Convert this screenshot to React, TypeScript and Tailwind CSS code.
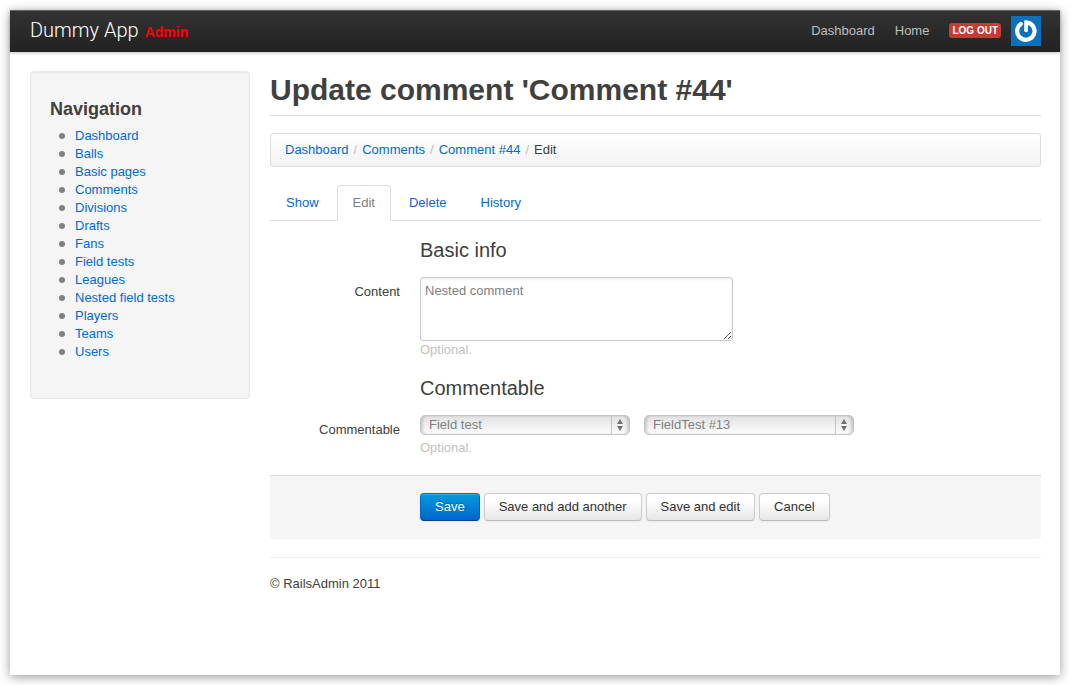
import React, { useState } from "react";

const navigation = [
  "Dashboard",
  "Balls",
  "Basic pages",
  "Comments",
  "Divisions",
  "Drafts",
  "Fans",
  "Field tests",
  "Leagues",
  "Nested field tests",
  "Players",
  "Teams",
  "Users",
];

const trail = ["Dashboard", "Comments", "Comment #44"];
const tabs = ["Show", "Edit", "Delete", "History"];
const secondaryActions = ["Save and add another", "Save and edit", "Cancel"];

function Avatar() {
  return (
    <svg viewBox="0 0 30 30" className="size-[30px]" role="img" aria-label="Avatar">
      <rect width="30" height="30" fill="#0c71b8" />
      <path
        d="M9.8 8 A8.7 8.7 0 1 0 19.6 7.8"
        fill="none"
        stroke="#fff"
        strokeWidth="4.2"
        strokeLinecap="round"
      />
      <path
        d="M13.2 5.2 Q13.2 4.2 14.4 4.2 C17.2 4.2 19.4 4.9 21.4 6.4 L18.6 9.8 L17 9 V14.4 Q17 16.2 15.1 16.2 Q13.2 16.2 13.2 14.4 Z"
        fill="#fff"
      />
    </svg>
  );
}

function Header() {
  return (
    <header className="flex h-[42px] shrink-0 items-center justify-between bg-linear-to-b from-[#333] to-[#222] pr-[19px] pb-px pl-5 shadow-[inset_0_1px_0_#666,0_1px_3px_rgba(0,0,0,0.25)]">
      <a href="#" className="flex items-baseline gap-[6px] text-white">
        <span className="font-['Roboto',sans-serif] text-xl leading-5 font-light">Dummy App</span>
        <small className="text-sm leading-5 font-bold text-[#f00]">Admin</small>
      </a>
      <nav className="flex items-center text-[#bfbfbf]">
        <a href="#" className="mr-5">Dashboard</a>
        <a href="#" className="mr-5">Home</a>
        <a href="#" className="mr-[10px] rounded-[3px] bg-[#c43c35] px-[3px] text-[10px] leading-[15px] font-bold text-white uppercase">
          Log out
        </a>
        <Avatar />
      </nav>
    </header>
  );
}

function Sidebar() {
  return (
    <aside className="w-[220px] shrink-0 rounded-[4px] border border-[#e8e8e8] bg-[#f5f5f5] p-[19px] shadow-[inset_0_1px_1px_rgba(0,0,0,0.05)]">
      <h2 className="text-lg leading-9 font-bold text-[#404040]">Navigation</h2>
      <ul className="mb-[18px] pl-[9px]">
        {navigation.map((item) => (
          <li
            key={item}
            className="flex items-center gap-[10px] before:size-[6px] before:rounded-full before:bg-[#808080]"
          >
            <a href="#" className="text-[#0069d6]">{item}</a>
          </li>
        ))}
      </ul>
    </aside>
  );
}

function Select({ label, options }: { label: string; options: string[] }) {
  return (
    <div className="relative w-[210px]">
      <select
        id={label.toLowerCase().replace(/ /g, "-")}
        aria-label={label}
        className="block h-5 w-full appearance-none rounded-[5px] border border-[#c4c4c4] bg-linear-to-b from-[#e2e2e2] to-[#fdfdfd] pr-6 pl-2 leading-[18px] text-[#808080] shadow-[inset_3px_0_3px_-1px_rgba(0,0,0,0.16),inset_-3px_0_3px_-1px_rgba(0,0,0,0.16)]"
      >
        {options.map((option) => (
          <option key={option}>{option}</option>
        ))}
      </select>
      <span className="pointer-events-none absolute inset-y-px right-0 flex w-[19px] items-center border-l border-[#c4c4c4] pl-[5px]">
        <svg viewBox="0 0 6 12" className="h-3 w-[6px]" fill="#707070" aria-hidden="true">
          <path d="M3 0 L6 5 H0 Z M0 7 H6 L3 12 Z" />
        </svg>
      </span>
    </div>
  );
}

function Legend({ children }: { children: React.ReactNode }) {
  return <h3 className="mt-[11px] mb-[9px] ml-[150px] text-xl leading-9 text-[#404040]">{children}</h3>;
}

const buttonBase =
  "h-7 rounded-[4px] border px-[14px] leading-[18px] shadow-[inset_0_1px_0_rgba(255,255,255,0.2),0_1px_2px_rgba(0,0,0,0.05)]";

function EditForm() {
  const [content, setContent] = useState("Nested comment");
  return (
    <form onSubmit={(event) => event.preventDefault()}>
      <Legend>Basic info</Legend>
      <div className="flex gap-5">
        <label htmlFor="content" className="w-[130px] shrink-0 pt-[6px] text-right">Content</label>
        <div>
          <textarea
            id="content"
            value={content}
            onChange={(event) => setContent(event.target.value)}
            className="block h-16 w-[313px] max-w-full rounded-[3px] border border-[#ccc] bg-white p-1 text-[#808080] shadow-[inset_0_1px_3px_rgba(0,0,0,0.1)]"
          />
          <p className="text-[#bfbfbf]">Optional.</p>
        </div>
      </div>
      <Legend>Commentable</Legend>
      <div className="flex gap-5">
        <label htmlFor="commentable-type" className="w-[130px] shrink-0 pt-[6px] text-right">Commentable</label>
        <div>
          <div className="flex flex-wrap gap-[14px]">
            <Select label="Commentable type" options={["Field test", "Player", "Team"]} />
            <Select label="Commentable record" options={["FieldTest #13"]} />
          </div>
          <p className="mt-1 text-[#bfbfbf]">Optional.</p>
        </div>
      </div>
      <div className="mt-[18px] flex flex-wrap gap-1 rounded-b-[3px] border-t border-[#ddd] bg-[#f5f5f5] pt-[17px] pb-[18px] pl-[150px]">
        <button
          type="submit"
          className={`${buttonBase} border-[#0064cd] border-b-[#003f81] bg-linear-to-b from-[#049cdb] to-[#0064cd] text-white [text-shadow:0_-1px_0_rgba(0,0,0,0.25)]`}
        >
          Save
        </button>
        {secondaryActions.map((action) => (
          <button
            key={action}
            type="button"
            className={`${buttonBase} border-[#ccc] border-b-[#bbb] bg-linear-to-b from-white from-25% to-[#e6e6e6] text-[#333]`}
          >
            {action}
          </button>
        ))}
      </div>
    </form>
  );
}

export default function App() {
  return (
    <div className="flex min-h-screen flex-col bg-white p-[10px] font-['Liberation_Sans',Arial,sans-serif] text-[13px] leading-[18px] text-[#404040]">
      <div className="flex grow flex-col bg-white shadow-[0_2px_10px_rgba(0,0,0,0.4)]">
        <Header />
        <div className="flex items-start gap-5 pt-[19px] pr-[19px] pb-5 pl-5">
          <Sidebar />
          <main className="min-w-0 grow">
            <h1 className="border-b border-[#ddd] pt-px pb-[7px] text-[30px] leading-9 font-bold">
              Update comment 'Comment #44'
            </h1>
            <nav
              aria-label="Breadcrumb"
              className="mt-[17px] rounded-[3px] border border-[#ddd] bg-linear-to-b from-white to-[#f3f3f3] px-[14px] py-[7px]"
            >
              <ol className="flex flex-wrap">
                {trail.map((item) => (
                  <li key={item}>
                    <a href="#" className="text-[#0069d6]">{item}</a>
                    <span className="px-[5px] text-[#bfbfbf]">/</span>
                  </li>
                ))}
                <li aria-current="page">Edit</li>
              </ol>
            </nav>
            <nav aria-label="Record" className="mt-[18px] flex gap-[2px] border-b border-[#ddd]">
              {tabs.map((tab) => (
                <a
                  key={tab}
                  href="#"
                  className={
                    tab === "Edit"
                      ? "-mb-px rounded-t-[4px] border border-[#ddd] border-b-white bg-white px-[15px] pt-2 pb-2 text-[#808080]"
                      : "-mb-px border border-transparent px-[15px] pt-2 pb-2 text-[#0069d6]"
                  }
                >
                  {tab}
                </a>
              ))}
            </nav>
            <EditForm />
            <footer className="mt-[18px] border-t border-[#eee] pt-[17px]">© RailsAdmin 2011</footer>
          </main>
        </div>
      </div>
    </div>
  );
}
